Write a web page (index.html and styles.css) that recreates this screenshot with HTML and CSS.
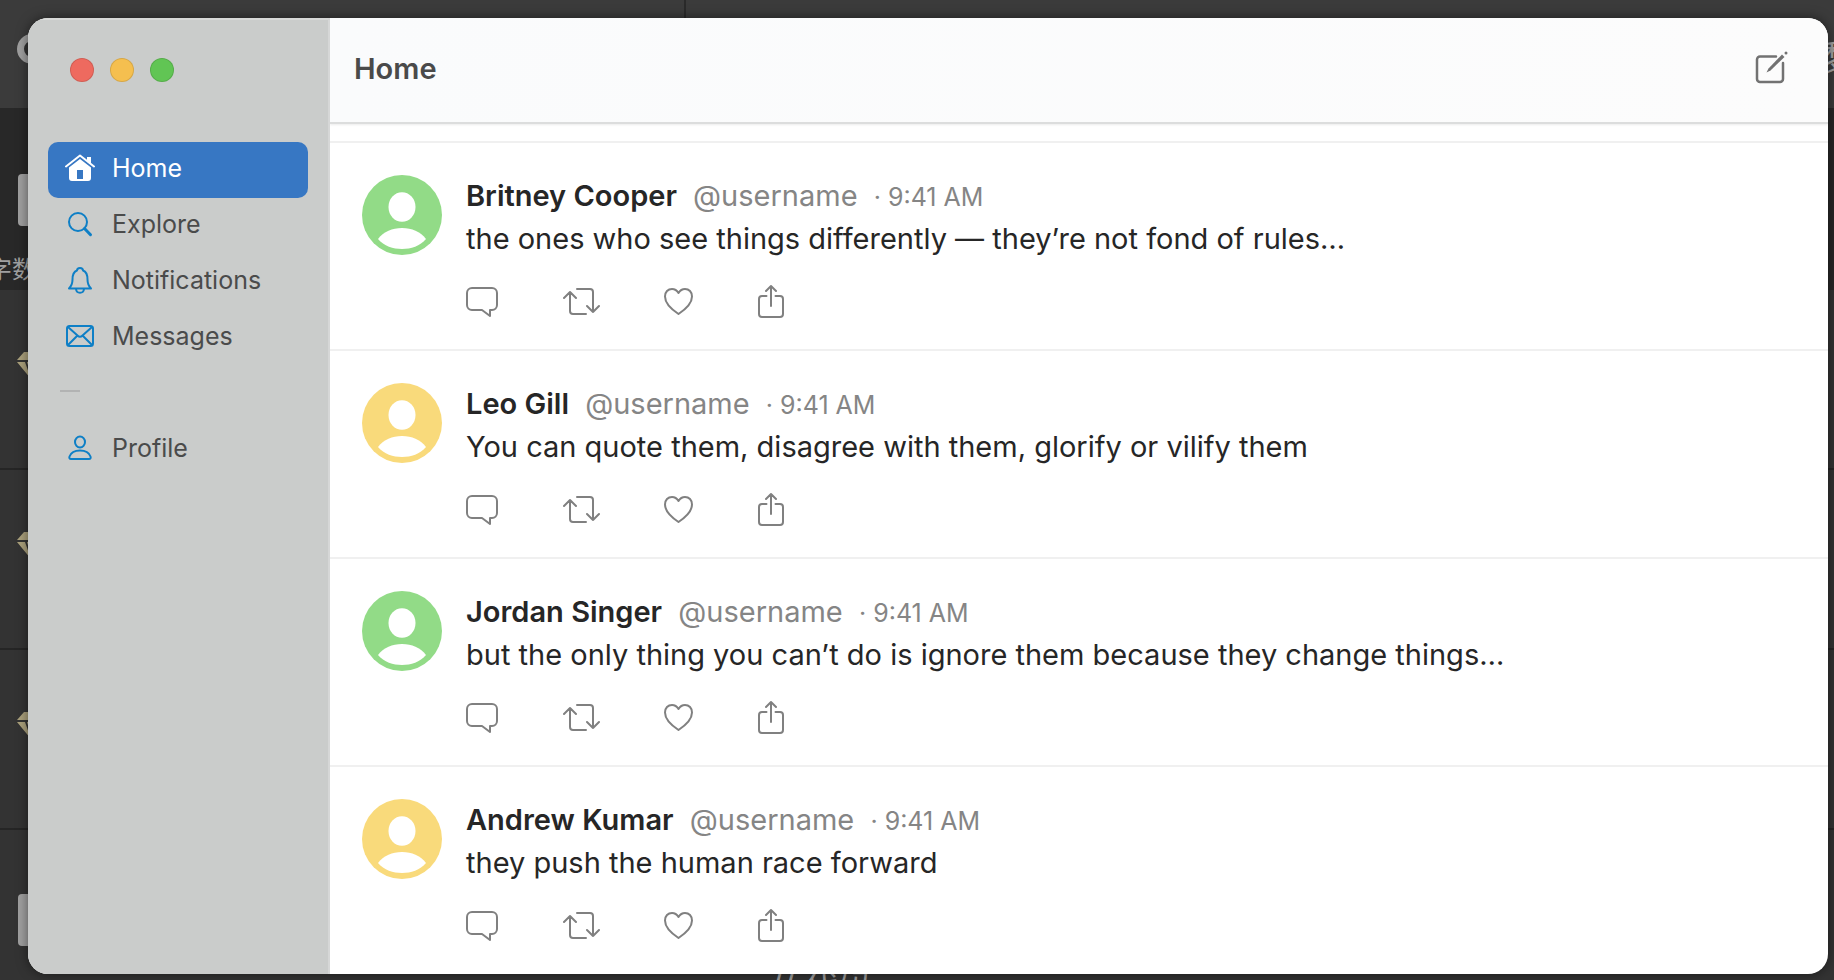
FILE: index.html
```
<!DOCTYPE html>
<html lang="en">
<head>
    <meta charset="utf-8">
    <title>Home</title>
    <link rel="stylesheet" href="styles.css">
</head>
<body>
<!-- icons -->
<svg class="hidden">
    <symbol id="comment" viewBox="0 0 32 36"><path d="M16 26H6a5 5 0 0 1-5-5V9a5 5 0 0 1 5-5h20a5 5 0 0 1 5 5v12a5 5 0 0 1-5 5h-2v6z"/></symbol>
    <symbol id="repost" viewBox="0 0 38 36"><path d="M15 5h13a3 3 0 0 1 3 3v20M25 22l6 6 6-6M24 30H11a3 3 0 0 1-3-3V8M2 14l6-6 6 6"/></symbol>
    <symbol id="heart" viewBox="0 0 30 36"><path d="M14.5 30C7 25 1 19 1 12.5 1 8 4 5 8 5c3 0 5 1.5 6.5 4C16 6.500 18 5 21 5c4 0 7 3 7 7.500C28 19 22 25 14.500 30z"/></symbol>
    <symbol id="share" viewBox="0 0 26 36"><path d="M8.500 12H4a3 3 0 0 0-3 3v15a3 3 0 0 0 3 3h18a3 3 0 0 0 3-3V15a3 3 0 0 0-3-3h-4.500M13 22V2M8 7l5-5 5 5"/></symbol>
    <symbol id="avatar" viewBox="0 0 80 80">
        <circle cx="40" cy="40" r="40" fill="currentColor"/>
        <ellipse cx="40" cy="32" rx="13.500" ry="14.800" fill="#fff"/>
        <path fill="#fff" d="M16 64C22 56.500 30 53 40 53s18 3.500 24 11C58 71 49 74 40 74s-18-3-24-10z"/>
    </symbol>
    <symbol id="diamond" viewBox="0 0 32 28"><path d="M8 0h16l7 8H1zM1 10h8l6 17zM11 10h10l-5 17zM23 10h8L17 27z"/></symbol>
</svg>

<!-- the app that lies behind the window -->
<div class="desktop" aria-hidden="true">
    <div class="bar"><span class="dot"></span><span class="side-text">黎</span></div>
    <div class="panel"><span class="tag"></span><span class="count">字数</span></div>
    <div class="line"><svg class="gem"><use href="#diamond"/></svg></div>
    <div class="line"><svg class="gem"><use href="#diamond"/></svg></div>
    <div class="line"><svg class="gem"><use href="#diamond"/></svg></div>
    <div class="line last"><span class="tag"></span></div>
    <span class="code">// 代码</span>
</div>

<div class="window">
    <aside class="sidebar">
        <div class="lights">
            <button class="light red" aria-label="Close"></button>
            <button class="light yellow" aria-label="Minimize"></button>
            <button class="light green" aria-label="Zoom"></button>
        </div>
        <nav>
            <a href="#" class="item active">
                <svg viewBox="0 0 30 30"><path d="M1 13.500L15 2.500l14 11" stroke="#fff"/><path class="solid" d="M22 4h4v6.500l-4-3z"/><path class="solid" fill-rule="evenodd" d="M4 14.500L15 6l11 8.500V25a3 3 0 0 1-3 3H7a3 3 0 0 1-3-3zM12 17v9h6v-9z"/></svg>
                Home
            </a>
            <a href="#" class="item">
                <svg viewBox="0 0 30 30"><circle cx="13" cy="13" r="9"/><path d="M19.500 19.500l6 6.200" stroke-width="3"/></svg>
                Explore
            </a>
            <a href="#" class="item">
                <svg viewBox="0 0 30 30"><path d="M4 23.500c3-3 3.500-5 3.500-9C7.500 9 9 6.500 12 5.500c0-3.500 6-3.500 6 0 3 1 4.500 3.500 4.500 9 0 4 .5 6 3.500 9zM11 24c.5 5 7.500 5 8 0"/></svg>
                Notifications
            </a>
            <a href="#" class="item">
                <svg viewBox="0 0 30 30"><rect x="2" y="5" width="26" height="20" rx="2.500"/><path d="M3 6l9.500 8.500c1.500 1.500 3.500 1.500 5 0L27 6M3 24l9-9M27 24l-9-9"/></svg>
                Messages
            </a>
            <hr>
            <a href="#" class="item">
                <svg viewBox="0 0 30 30"><ellipse cx="15" cy="9" rx="5" ry="5.500"/><path d="M6 26c-1.500 0-2-1-1.500-2.500C6 19.500 10 17.500 15 17.500s9 2 10.500 6C26 25 25.500 26 24 26z"/></svg>
                Profile
            </a>
        </nav>
    </aside>

    <main>
        <header>
            <h1>Home</h1>
            <button class="compose" aria-label="Compose">
                <svg viewBox="0 0 34 34"><path d="M22 5.500H6a3 3 0 0 0-3 3V28a3 3 0 0 0 3 3h20a3 3 0 0 0 3-3V12"/><path class="pencil" d="M12.500 21.500l2-4L28 3.500l2.500 2.500-14 13.500z"/><circle class="pencil" cx="32" cy="2" r="1.500"/></svg>
            </button>
        </header>

        <article>
            <svg class="avatar green"><use href="#avatar"/></svg>
            <div class="post">
                <div class="by"><b>Britney Cooper</b> <span class="user">@username</span> <time>· 9:41 AM</time></div>
                <p>the ones who see things differently — they’re not fond of rules…</p>
                <div class="actions">
                    <button aria-label="Comment"><svg width="32" height="36"><use href="#comment"/></svg></button>
                    <button aria-label="Repost"><svg width="38" height="36"><use href="#repost"/></svg></button>
                    <button aria-label="Like"><svg width="30" height="36"><use href="#heart"/></svg></button>
                    <button aria-label="Share"><svg width="26" height="36"><use href="#share"/></svg></button>
                </div>
            </div>
        </article>

        <article>
            <svg class="avatar yellow"><use href="#avatar"/></svg>
            <div class="post">
                <div class="by"><b>Leo Gill</b> <span class="user">@username</span> <time>· 9:41 AM</time></div>
                <p>You can quote them, disagree with them, glorify or vilify them</p>
                <div class="actions">
                    <button aria-label="Comment"><svg width="32" height="36"><use href="#comment"/></svg></button>
                    <button aria-label="Repost"><svg width="38" height="36"><use href="#repost"/></svg></button>
                    <button aria-label="Like"><svg width="30" height="36"><use href="#heart"/></svg></button>
                    <button aria-label="Share"><svg width="26" height="36"><use href="#share"/></svg></button>
                </div>
            </div>
        </article>

        <article>
            <svg class="avatar green"><use href="#avatar"/></svg>
            <div class="post">
                <div class="by"><b>Jordan Singer</b> <span class="user">@username</span> <time>· 9:41 AM</time></div>
                <p>but the only thing you can’t do is ignore them because they change things…</p>
                <div class="actions">
                    <button aria-label="Comment"><svg width="32" height="36"><use href="#comment"/></svg></button>
                    <button aria-label="Repost"><svg width="38" height="36"><use href="#repost"/></svg></button>
                    <button aria-label="Like"><svg width="30" height="36"><use href="#heart"/></svg></button>
                    <button aria-label="Share"><svg width="26" height="36"><use href="#share"/></svg></button>
                </div>
            </div>
        </article>

        <article>
            <svg class="avatar yellow"><use href="#avatar"/></svg>
            <div class="post">
                <div class="by"><b>Andrew Kumar</b> <span class="user">@username</span> <time>· 9:41 AM</time></div>
                <p>they push the human race forward</p>
                <div class="actions">
                    <button aria-label="Comment"><svg width="32" height="36"><use href="#comment"/></svg></button>
                    <button aria-label="Repost"><svg width="38" height="36"><use href="#repost"/></svg></button>
                    <button aria-label="Like"><svg width="30" height="36"><use href="#heart"/></svg></button>
                    <button aria-label="Share"><svg width="26" height="36"><use href="#share"/></svg></button>
                </div>
            </div>
        </article>
    </main>
</div>
</body>
</html>
```
FILE: styles.css
```
* {
    box-sizing: border-box;
}
body {
    margin: 0;
    padding: 18px 6px 6px 28px;
    height: 100vh;
    overflow: hidden;
    background: #333;
    font-family: Inter, "Noto Sans CJK SC", sans-serif;
}
.hidden {
    display: none;
}
button {
    padding: 0;
    border: 0;
    background: none;
}
svg {
    display: block;
    fill: none;
    stroke-width: 2;
    stroke-linecap: round;
    stroke-linejoin: round;
}

/* desktop */
.desktop {
    position: absolute;
    inset: 0;
    overflow: hidden;
    color: #a0a0a0;
}
.bar {
    display: flex;
    justify-content: space-between;
    height: 108px;
    padding: 34px 0 0 17px;
    background: linear-gradient(to right, transparent 684px, #2a2a2a 684px, #2a2a2a 686px, transparent 686px), #3b3b3b;
}
.dot {
    width: 30px;
    height: 30px;
    border: 7px solid #a0a0a0;
    border-radius: 50%;
    background: #333;
}
.side-text {
    width: 12px;
    overflow: hidden;
    font-size: 36px;
    line-height: 50px;
}
.panel {
    height: 182px;
    padding-top: 66px;
    background: #282828;
}
.tag {
    display: block;
    width: 40px;
    height: 52px;
    margin-left: 18px;
    border-radius: 4px;
    background: #a0a0a0;
}
.count {
    display: block;
    margin: 26px 0 0 -12px;
    font-size: 24px;
    line-height: 36px;
}
.line {
    height: 180px;
    padding: 62px 0 0 16px;
    border-bottom: 2px solid #252525;
}
.line.last {
    padding: 64px 0 0;
    border: 0;
}
.gem {
    width: 32px;
    height: 28px;
    fill: #aba17c;
}
.code {
    position: absolute;
    left: 770px;
    top: 967px;
    font-size: 34px;
    line-height: 40px;
}

/* window */
.window {
    position: relative;
    display: flex;
    height: 100%;
    border-radius: 20px;
    overflow: hidden;
    background: #fff;
    box-shadow: 0 0 12px rgba(0,0,0,0.5);
}
.sidebar {
    flex: none;
    width: 302px;
    padding: 40px 20px 0;
    background: #cacccb;
    border-right: 2px solid #d6d7d7;
    box-shadow: inset 0 2px 0 #d8d9d8;
}
.lights {
    display: flex;
    gap: 16px;
    padding-left: 22px;
    margin-bottom: 60px;
}
.light {
    width: 24px;
    height: 24px;
    border: 1px solid rgba(0,0,0,0.12);
    border-radius: 50%;
}
.light.red {
    background: #ee6a5f;
}
.light.yellow {
    background: #f5bf4f;
}
.light.green {
    background: #61c554;
}
.item {
    display: flex;
    align-items: center;
    gap: 17px;
    height: 56px;
    padding: 0 17px 4px;
    border-radius: 10px;
    color: #4a4b4b;
    font-size: 25px;
    text-decoration: none;
}
.item svg {
    width: 30px;
    height: 30px;
    stroke: #0e7fc6;
}
.item.active {
    background: #3777c3;
    color: #fff;
}
.item .solid {
    fill: #fff;
    stroke: none;
}
hr {
    width: 20px;
    height: 2px;
    margin: 24px 12px 30px;
    border: 0;
    background: #b2b3b3;
}

main {
    flex: 1;
    min-width: 0;
    overflow: hidden;
}
header {
    display: flex;
    justify-content: space-between;
    align-items: center;
    height: 106px;
    margin-bottom: 17px;
    padding: 0 40px 4px 24px;
    background: linear-gradient(to right, #fafbfc, #fcfcfc);
    border-bottom: 2px solid #dcdddd;
    box-shadow: 0 1px 2px rgba(0,0,0,0.08);
}
h1 {
    margin: 0;
    color: #4a4a4a;
    font-size: 29px;
    font-weight: 600;
}
.compose svg {
    width: 34px;
    height: 34px;
    stroke: #727272;
    stroke-width: 2.5;
}
.compose .pencil {
    fill: #727272;
    stroke: none;
}
article {
    display: flex;
    gap: 24px;
    height: 208px;
    padding: 32px;
    border-top: 2px solid #f0f0f0;
}
.avatar {
    flex: none;
    width: 80px;
    height: 80px;
}
.avatar.green {
    color: #92db87;
}
.avatar.yellow {
    color: #f9da7b;
}
.post {
    color: #262626;
    font-size: 29px;
    line-height: 42px;
    white-space: nowrap;
}
.by b {
    font-weight: 600;
}
.by .user {
    margin-left: 8px;
    color: #858585;
}
.by time {
    margin-left: 8px;
    color: #858585;
    font-size: 25px;
}
.post p {
    margin: 0;
}
.actions {
    display: flex;
    gap: 64px;
    margin-top: 24px;
}
.actions svg {
    stroke: #808080;
}
```
